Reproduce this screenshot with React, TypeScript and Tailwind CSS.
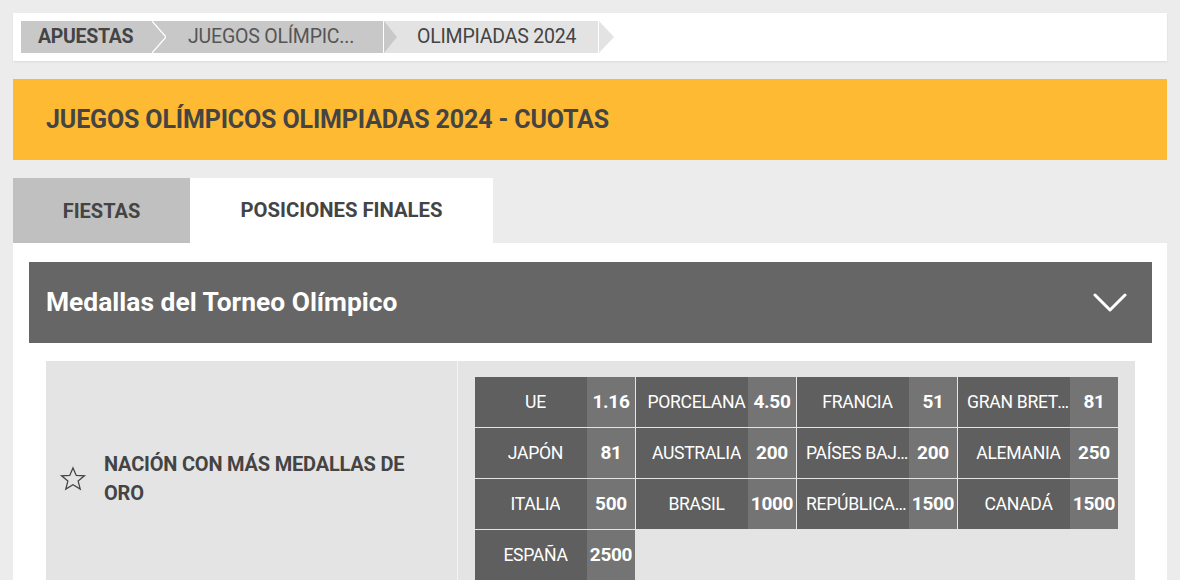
import React from "react";

const base = { fontFamily: "Roboto, 'Liberation Sans', sans-serif" };

type Odd = { name: string; price: string };

const odds: Odd[] = [
  { name: "UE", price: "1.16" },
  { name: "PORCELANA", price: "4.50" },
  { name: "FRANCIA", price: "51" },
  { name: "GRAN BRETAÑA", price: "81" },
  { name: "JAPÓN", price: "81" },
  { name: "AUSTRALIA", price: "200" },
  { name: "PAÍSES BAJOS", price: "200" },
  { name: "ALEMANIA", price: "250" },
  { name: "ITALIA", price: "500" },
  { name: "BRASIL", price: "1000" },
  { name: "REPÚBLICA CHECA", price: "1500" },
  { name: "CANADÁ", price: "1500" },
  { name: "ESPAÑA", price: "2500" },
];

function Breadcrumb() {
  return (
    <div className="flex h-[48px] items-center bg-white pl-[8px] shadow-[0_1px_2px_rgba(0,0,0,0.08)]">
      <div className="flex h-[32px] w-[131px] items-center bg-[#c8c8c8] pl-[17px] text-[19.5px] font-bold tracking-[-0.3px] text-[#444]">
        APUESTAS
      </div>
      <svg width="14" height="32" viewBox="0 0 14 32" className="block bg-[#c8c8c8]">
        <polyline points="0,0 14,16 0,32" fill="none" stroke="#ffffff" strokeWidth="1.2" />
      </svg>
      <div className="flex h-[32px] w-[217px] items-center bg-[#c8c8c8] pl-[22px] text-[19.5px] tracking-[-0.2px] text-[#555]">
        JUEGOS OLÍMPIC...
      </div>
      <div className="h-[32px] w-px bg-white" />
      <svg width="13" height="32" viewBox="0 0 13 32" className="block bg-[#e3e3e3]">
        <polygon points="0,0 13,16 0,32" fill="#c8c8c8" />
      </svg>
      <div className="flex h-[32px] w-[201px] items-center bg-[#e3e3e3] pl-[20px] text-[19.5px] tracking-[-0.2px] text-[#444]">
        OLIMPIADAS 2024
      </div>
      <div className="h-[32px] w-px bg-white" />
      <svg width="15" height="32" viewBox="0 0 15 32" className="block">
        <polygon points="0,0 15,16 0,32" fill="#e3e3e3" />
      </svg>
    </div>
  );
}

function OddCell({ o }: { o: Odd }) {
  return (
    <div className="flex h-[50px] text-white">
      <div className="flex min-w-0 flex-1 items-center justify-center bg-[#5f5f5f] pl-[9px] text-[17.6px] tracking-[-0.3px]">
        <span className="truncate">{o.name}</span>
      </div>
      <div className="flex w-[48px] items-center justify-center bg-[#747474] text-[19px] font-bold tracking-[-0.3px]">
        {o.price}
      </div>
    </div>
  );
}

export default function App() {
  return (
    <div className="min-h-[580px] bg-[#ececec] px-[13px] pt-[13px]" style={base}>
      <Breadcrumb />

      <div className="mt-[18px] flex h-[81px] items-center bg-[#ffba33] pl-[33px]">
        <h1 className="text-[25px] font-bold tracking-[-0.15px] text-[#444]">
          JUEGOS OLÍMPICOS OLIMPIADAS 2024 - CUOTAS
        </h1>
      </div>

      <div className="mt-[18px] flex h-[65px]">
        <div className="flex w-[177px] items-center justify-center bg-[#c0c0c0] text-[20px] font-bold text-[#444]">
          FIESTAS
        </div>
        <div className="flex w-[303px] items-center justify-center bg-white text-[20.3px] font-bold text-[#444]">
          POSICIONES FINALES
        </div>
      </div>

      <div className="bg-white pb-[20px] pl-[16px] pr-[15px] pt-[19px]">
        <div className="flex h-[81px] items-center justify-between bg-[#666666] pl-[17px] pr-[25px]">
          <h2 className="text-[26.4px] font-bold text-white">Medallas del Torneo Olímpico</h2>
          <svg width="34" height="20" viewBox="0 0 34 20" fill="none">
            <polyline
              points="2,2 17,17 32,2"
              stroke="#ffffff"
              strokeWidth="3"
              strokeLinecap="round"
              strokeLinejoin="round"
            />
          </svg>
        </div>

        <div className="mx-[17px] mt-[18px] flex bg-[#e4e4e4]">
          <div className="flex w-[411px] items-center pl-[13px] pr-[20px]">
            <svg width="28" height="28" viewBox="0 0 24 24" fill="none" className="shrink-0">
              <polygon
                points="12,2.5 14.8,9 21.8,9.3 16.4,13.8 18.2,20.7 12,16.9 5.8,20.7 7.6,13.8 2.2,9.3 9.2,9"
                stroke="#444"
                strokeWidth="1.1"
                strokeLinejoin="miter"
              />
            </svg>
            <div className="ml-[17px] text-[20px] font-bold leading-[29px] tracking-[-0.2px] text-[#444]">
              NACIÓN CON MÁS MEDALLAS DE ORO
            </div>
          </div>
          <div className="w-px bg-[#f4f4f4]" />
          <div className="flex-1 pb-[16px] pl-[17px] pt-[16px]">
            <div className="grid w-[643px] grid-cols-4 gap-px">
              {odds.map((o) => (
                <OddCell key={o.name} o={o} />
              ))}
            </div>
          </div>
        </div>
      </div>
    </div>
  );
}
